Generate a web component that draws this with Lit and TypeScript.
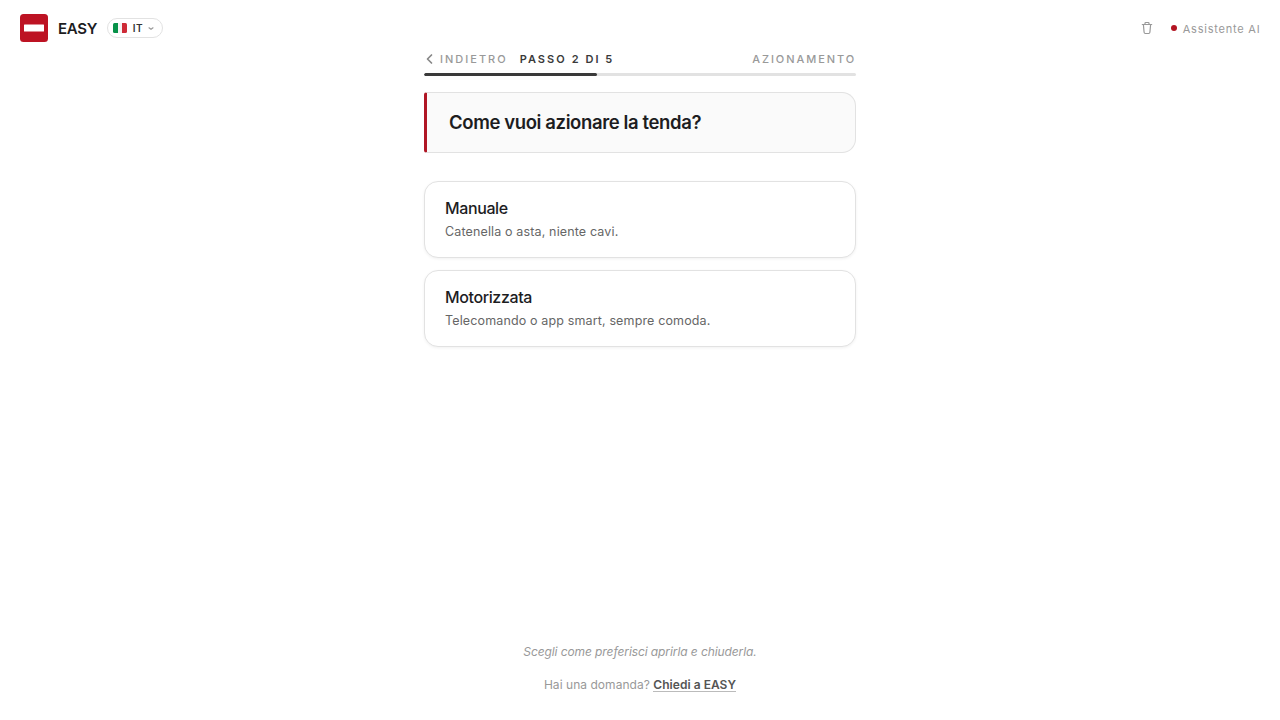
import { LitElement, html, css } from "lit";
import { customElement, property, state } from "lit/decorators.js";

@customElement("app-header")
class AppHeader extends LitElement {
  static styles = css`
    :host { display: flex; align-items: center; justify-content: space-between; height: 56px; padding: 0 20px; box-sizing: border-box; flex: none; }
    .group { display: flex; align-items: center; }
    .logo { display: block; }
    .name { margin: 0 0 0 10px; padding-top: 1px; width: 39px; font-size: 15px; line-height: 20px; font-weight: 600; letter-spacing: -0.25px; color: #1d1d1f; white-space: nowrap; }
    .lang { display: flex; align-items: center; box-sizing: border-box; width: 56px; height: 20px; margin-left: 10px; padding: 0 5px; border: 1px solid #e2e2e2; border-radius: 10px; background: #fff; font: inherit; }
    .flag { display: block; }
    .code { margin-left: 5px; width: 12px; font-size: 10px; line-height: 14px; font-weight: 600; letter-spacing: 0.6px; color: #333; }
    .chev { margin-left: 3px; display: block; }
    .trash { display: block; margin-right: 18px; }
    .dot { width: 6px; height: 6px; border-radius: 50%; background: #b31422; }
    .assist { margin-left: 6px; padding-top: 2px; font-size: 11px; line-height: 16px; letter-spacing: 0.77px; color: #999; margin-right: -0.4px; white-space: nowrap; }
  `;
  render() {
    return html`
      <div class="group">
        <svg class="logo" width="28" height="28" viewBox="0 0 28 28"><rect width="28" height="28" rx="3.5" fill="#bd1323"/><rect x="4" y="10.5" width="20" height="7" rx=".5" fill="#fff"/></svg>
        <h1 class="name">EASY</h1>
        <button class="lang">
          <svg class="flag" width="14" height="10" viewBox="0 0 14 10"><path d="M1.5 0H5v10H1.500Q0 10 0 8.500v-7Q0 0 1.500 0z" fill="#079149"/><path d="M5 0h4v10H5z" fill="#f5f5f5"/><path d="M9 0h3.500Q14 0 14 1.500v7Q14 10 12.500 10H9z" fill="#ce2b37"/></svg>
          <span class="code">IT</span>
          <svg class="chev" width="8" height="8" viewBox="0 0 8 8" fill="none" stroke="#999" stroke-width="1.200" stroke-linecap="round" stroke-linejoin="round"><path d="M2 3.800l2 1.500 2-1.500"/></svg>
        </button>
      </div>
      <div class="group">
        <svg class="trash" width="12" height="14" viewBox="0 0 12 14" fill="none" stroke="#999" stroke-width="1.200" stroke-linecap="round" stroke-linejoin="round"><path d="M1.300 3.500h9.400M4 3.300V2.300q0-.8.800-.8h2.400q.8 0 .8.800v1M2.400 3.700l.7 7.600q.1 1.200 1.200 1.200h3.400q1.100 0 1.200-1.200l.7-7.600"/></svg>
        <span class="dot"></span>
        <span class="assist">Assistente AI</span>
      </div>
    `;
  }
}

@customElement("step-progress")
class StepProgress extends LitElement {
  @property({ type: Number }) step = 2;
  @property({ type: Number }) total = 5;
  @property() label = "";
  static styles = css`
    :host { display: block; }
    .row { display: flex; align-items: center; height: 14px; font-size: 11px; line-height: 14px; font-weight: 500; white-space: nowrap; }
    .back { display: flex; align-items: center; padding: 0; border: 0; background: none; font: inherit; letter-spacing: 2px; color: #999; }
    .back svg { margin: 0 4px 0 0; }
    .step { margin-left: 12px; font-weight: 600; letter-spacing: 2.06px; color: #3a3a3a; }
    .label { margin-left: auto; letter-spacing: 1.93px; margin-right: -0.1px; color: #999; }
    .track { margin-top: 7px; height: 3px; border-radius: 2px; background: #e2e2e2; overflow: hidden; }
    .bar { height: 3px; border-radius: 2px; background: #3a3a3a; }
  `;
  render() {
    return html`
      <div class="row">
        <button class="back"><svg width="12" height="12" viewBox="0 0 12 12" fill="none" stroke="#888" stroke-width="1.700" stroke-linecap="round" stroke-linejoin="round"><path d="M7.500 2L3.500 6l4 4"/></svg>INDIETRO</button>
        <span class="step">PASSO ${this.step} DI ${this.total}</span>
        <span class="label">${this.label}</span>
      </div>
      <div class="track"><div class="bar" style="width:${(this.step / this.total) * 100}%"></div></div>
    `;
  }
}

@customElement("option-card")
class OptionCard extends LitElement {
  @property() heading = "";
  @property() text = "";
  static styles = css`
    :host { display: block; }
    .card { display: block; width: 100%; height: 77px; box-sizing: border-box; padding: 14px 20px 16px; border: 1px solid #e2e2e2; border-radius: 14px; background: #fff; box-shadow: 0 1px 3px rgba(0, 0, 0, 0.06); font: inherit; text-align: left; }
    .heading { display: block; font-size: 16px; line-height: 22px; font-weight: 500; letter-spacing: -0.38px; color: #1d1d1f; }
    .text { display: block; margin-top: 3px; font-size: 12.5px; line-height: 19px; letter-spacing: 0.14px; color: #666; }
  `;
  render() {
    return html`<button class="card"><span class="heading">${this.heading}</span><span class="text">${this.text}</span></button>`;
  }
}

@customElement("app-root")
class AppRoot extends LitElement {
  @state() options = [
    { heading: "Manuale", text: "Catenella o asta, niente cavi." },
    { heading: "Motorizzata", text: "Telecomando o app smart, sempre comoda." },
  ];
  static styles = css`
    :host { display: flex; flex-direction: column; height: 100vh; background: #fff; font-family: Inter, "Liberation Sans", sans-serif; -webkit-font-smoothing: antialiased; }
    .main { display: flex; flex-direction: column; flex: 1; width: 432px; margin: -4px auto 0; }
    .question { display: flex; align-items: center; box-sizing: border-box; height: 61px; margin: 16px 0 28px; padding: 0 22px 2px; border: 1px solid #e2e2e2; border-left: 3px solid #b01625; border-radius: 3px 14px 14px 3px; background: #fafafa; }
    .title { margin: 0; font-size: 18.5px; line-height: 26px; font-weight: 600; letter-spacing: -0.38px; color: #1d1d1f; white-space: nowrap; }
    .options { display: flex; flex-direction: column; gap: 12px; }
    .footer { margin-top: auto; padding-bottom: 26px; text-align: center; color: #999; font-size: 12px; line-height: 18px; }
    .hint { margin: 0 0 15px; font-style: italic; letter-spacing: -0.09px; }
    .ask { margin: 0; letter-spacing: 0.04px; }
    .link { display: inline-block; line-height: 13px; font-weight: 600; color: #555; text-decoration: none; border-bottom: 1px solid #bbb; }
  `;
  render() {
    return html`
      <app-header></app-header>
      <main class="main">
        <step-progress step="2" total="5" label="AZIONAMENTO"></step-progress>
        <section class="question"><h2 class="title">Come vuoi azionare la tenda?</h2></section>
        <div class="options">${this.options.map((o) => html`<option-card .heading=${o.heading} .text=${o.text}></option-card>`)}</div>
        <footer class="footer">
          <p class="hint">Scegli come preferisci aprirla e chiuderla.</p>
          <p class="ask">Hai una domanda? <a class="link">Chiedi a EASY</a></p>
        </footer>
      </main>
    `;
  }
}
